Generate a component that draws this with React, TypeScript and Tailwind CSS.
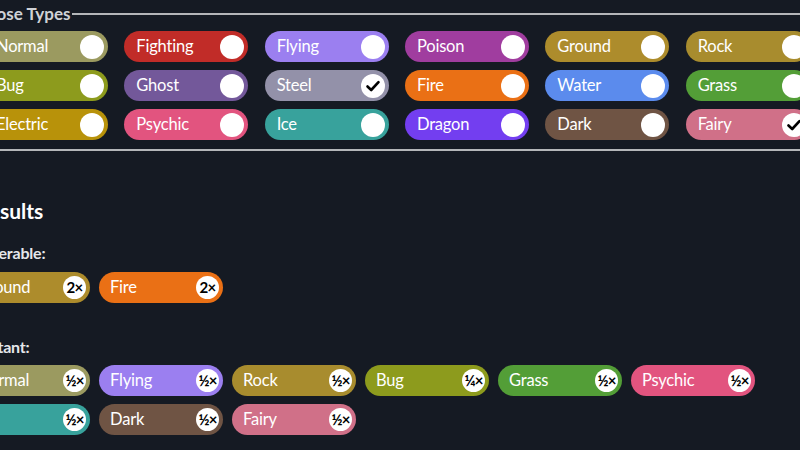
import React from "react";

type T = { name: string; color: string; checked?: boolean };

const types: T[] = [
  { name: "Normal", color: "#9b9a60" },
  { name: "Fighting", color: "#c12c28" },
  { name: "Flying", color: "#9b7ff0" },
  { name: "Poison", color: "#a03d9f" },
  { name: "Ground", color: "#ad8c2c" },
  { name: "Rock", color: "#a88c2e" },
  { name: "Bug", color: "#8d9b1d" },
  { name: "Ghost", color: "#73589a" },
  { name: "Steel", color: "#9391a9", checked: true },
  { name: "Fire", color: "#ea7015" },
  { name: "Water", color: "#5b8bed" },
  { name: "Grass", color: "#539e37" },
  { name: "Electric", color: "#b8920a" },
  { name: "Psychic", color: "#e2547f" },
  { name: "Ice", color: "#38a29c" },
  { name: "Dragon", color: "#733ef0" },
  { name: "Dark", color: "#6f5444" },
  { name: "Fairy", color: "#d07088", checked: true },
];

const colorOf = (n: string) => types.find((t) => t.name === n)!.color;

const vulnerable = [
  { name: "Ground", m: "2×" },
  { name: "Fire", m: "2×" },
];
const resistant = [
  { name: "Normal", m: "½×" },
  { name: "Flying", m: "½×" },
  { name: "Rock", m: "½×" },
  { name: "Bug", m: "¼×" },
  { name: "Grass", m: "½×" },
  { name: "Psychic", m: "½×" },
  { name: "Ice", m: "½×" },
  { name: "Dark", m: "½×" },
  { name: "Fairy", m: "½×" },
];

function Toggle({ t }: { t: T }) {
  return (
    <div
      className="flex h-[31px] w-[124px] items-center justify-between rounded-full pl-3 pr-[4px] text-white"
      style={{ backgroundColor: t.color }}
    >
      <span className="text-[16.5px] leading-none tracking-[-0.2px]">{t.name}</span>
      <span className="flex h-[24px] w-[24px] items-center justify-center rounded-full bg-white">
        {t.checked && (
          <svg width="16" height="16" viewBox="0 0 16 16">
            <path d="M2.5 8.5 L6.2 12 L13.5 4.2" fill="none" stroke="#000" strokeWidth="2.6" strokeLinecap="round" strokeLinejoin="round" />
          </svg>
        )}
      </span>
    </div>
  );
}

function Result({ name, m }: { name: string; m: string }) {
  return (
    <div
      className="flex h-[31px] w-[124px] items-center justify-between rounded-full pl-[11px] pr-[4px] text-white"
      style={{ backgroundColor: colorOf(name) }}
    >
      <span className="text-[16.5px] leading-none tracking-[-0.2px]">{name}</span>
      <span className="flex h-[23px] w-[23px] items-center justify-center rounded-full bg-white text-[15px] font-bold leading-none tracking-[-0.8px] text-black">
        {m}
      </span>
    </div>
  );
}

export default function App() {
  return (
    <div
      className="h-[450px] w-[800px] overflow-hidden bg-[#151a23]"
      style={{ fontFamily: "Lato, 'Noto Sans', sans-serif" }}
    >
      <div className="ml-[-34px] w-[870px]">
        <fieldset className="border-2 border-[#b4b6b9] pb-[9px] pl-4 pr-4 pt-[3px]">
          <legend className="-ml-[20px] px-[2px] text-[17px] font-bold leading-[28px] text-[#cfd2d6]">
            Choose Types
          </legend>
          <div className="grid grid-cols-[repeat(6,124px)] gap-x-[16.33px] gap-y-2">
            {types.map((t) => (
              <Toggle key={t.name} t={t} />
            ))}
          </div>
        </fieldset>

        <h2 className="ml-[10px] mt-[46px] text-[21px] font-bold leading-[28px] text-white">Results</h2>

        <div className="mt-[16px]">
          <div className="ml-[1px] text-[16px] font-bold leading-[24px] tracking-[-0.2px] text-[#e5e7eb]">Vulnerable:</div>
          <div className="mt-[7px] flex flex-wrap gap-x-[9px] gap-y-2">
            {vulnerable.map((r) => (
              <Result key={r.name} {...r} />
            ))}
          </div>
        </div>

        <div className="mt-[32px]">
          <div className="ml-[-4px] text-[16px] font-bold leading-[24px] tracking-[-0.2px] text-[#e5e7eb]">Resistant:</div>
          <div className="mt-[6px] flex w-[800px] flex-wrap gap-x-[9px] gap-y-2">
            {resistant.map((r) => (
              <Result key={r.name} {...r} />
            ))}
          </div>
        </div>
      </div>
    </div>
  );
}
